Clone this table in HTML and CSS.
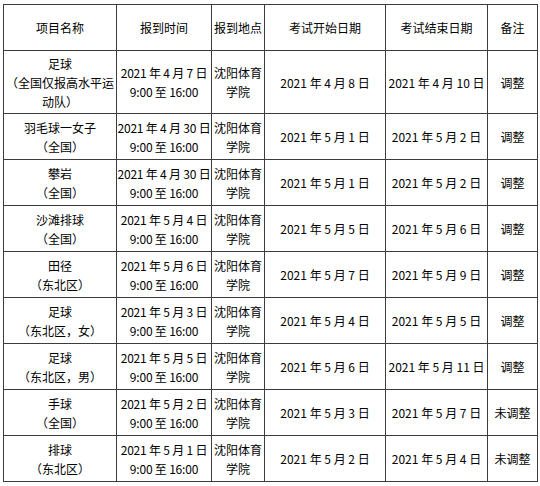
FILE: index.html
```html
<!DOCTYPE html>
<html lang="zh-CN">
<head>
<meta charset="utf-8">
<title>考试安排</title>
<link rel="stylesheet" href="styles.css">
</head>
<body>
<table class="sched">
  <colgroup>
    <col class="c1"><col class="c2"><col class="c3"><col class="c4"><col class="c5"><col class="c6">
  </colgroup>
  <tr class="head">
    <td>项目名称</td><td>报到时间</td><td>报到地点</td><td>考试开始日期</td><td>考试结束日期</td><td>备注</td>
  </tr>
  <tr class="tall">
    <td>足球<br>（全国仅报高水平运动队）</td>
    <td class="nw">2021 年 4 月 7 日<br>9:00 至 16:00</td>
    <td>沈阳体育<br>学院</td>
    <td>2021 年 4 月 8 日</td>
    <td>2021 年 4 月 10 日</td>
    <td>调整</td>
  </tr>
  <tr>
    <td>羽毛球一女子<br>（全国）</td>
    <td class="nw">2021 年 4 月 30 日<br>9:00 至 16:00</td>
    <td>沈阳体育<br>学院</td>
    <td>2021 年 5 月 1 日</td>
    <td>2021 年 5 月 2 日</td>
    <td>调整</td>
  </tr>
  <tr>
    <td>攀岩<br>（全国）</td>
    <td class="nw">2021 年 4 月 30 日<br>9:00 至 16:00</td>
    <td>沈阳体育<br>学院</td>
    <td>2021 年 5 月 1 日</td>
    <td>2021 年 5 月 2 日</td>
    <td>调整</td>
  </tr>
  <tr>
    <td>沙滩排球<br>（全国）</td>
    <td class="nw">2021 年 5 月 4 日<br>9:00 至 16:00</td>
    <td>沈阳体育<br>学院</td>
    <td>2021 年 5 月 5 日</td>
    <td>2021 年 5 月 6 日</td>
    <td>调整</td>
  </tr>
  <tr>
    <td>田径<br>（东北区）</td>
    <td class="nw">2021 年 5 月 6 日<br>9:00 至 16:00</td>
    <td>沈阳体育<br>学院</td>
    <td>2021 年 5 月 7 日</td>
    <td>2021 年 5 月 9 日</td>
    <td>调整</td>
  </tr>
  <tr>
    <td>足球<br>（东北区，女）</td>
    <td class="nw">2021 年 5 月 3 日<br>9:00 至 16:00</td>
    <td>沈阳体育<br>学院</td>
    <td>2021 年 5 月 4 日</td>
    <td>2021 年 5 月 5 日</td>
    <td>调整</td>
  </tr>
  <tr>
    <td>足球<br>（东北区，男）</td>
    <td class="nw">2021 年 5 月 5 日<br>9:00 至 16:00</td>
    <td>沈阳体育<br>学院</td>
    <td>2021 年 5 月 6 日</td>
    <td>2021 年 5 月 11 日</td>
    <td>调整</td>
  </tr>
  <tr>
    <td>手球<br>（全国）</td>
    <td class="nw">2021 年 5 月 2 日<br>9:00 至 16:00</td>
    <td>沈阳体育<br>学院</td>
    <td>2021 年 5 月 3 日</td>
    <td>2021 年 5 月 7 日</td>
    <td>未调整</td>
  </tr>
  <tr>
    <td>排球<br>（东北区）</td>
    <td class="nw">2021 年 5 月 1 日<br>9:00 至 16:00</td>
    <td>沈阳体育<br>学院</td>
    <td>2021 年 5 月 2 日</td>
    <td>2021 年 5 月 4 日</td>
    <td>未调整</td>
  </tr>
</table>
</body>
</html>
```
FILE: styles.css
```css
html, body {
  margin: 0;
  padding: 0;
  background: #ffffff;
}
body {
  padding: 4px 0 0 3px;
  font-family: "Noto Sans CJK SC", "DejaVu Sans", sans-serif;
  font-size: 12px;
  color: #000000;
}
.sched {
  border-collapse: collapse;
  table-layout: fixed;
  width: 534px;
}
.c1 { width: 113px; }
.c2 { width: 95px; }
.c3 { width: 53px; }
.c4 { width: 121px; }
.c5 { width: 102px; }
.c6 { width: 50px; }
.sched td {
  border: 1px solid #3c3c3c;
  text-align: center;
  vertical-align: middle;
  padding: 0 1px;
  line-height: 19px;
  height: 46px;
  box-sizing: border-box;
  white-space: normal;
  overflow: hidden;
}
.sched .nw {
  white-space: nowrap;
  padding: 0;
  letter-spacing: -0.2px;
}
.sched .tall td { height: 63px; }
```
